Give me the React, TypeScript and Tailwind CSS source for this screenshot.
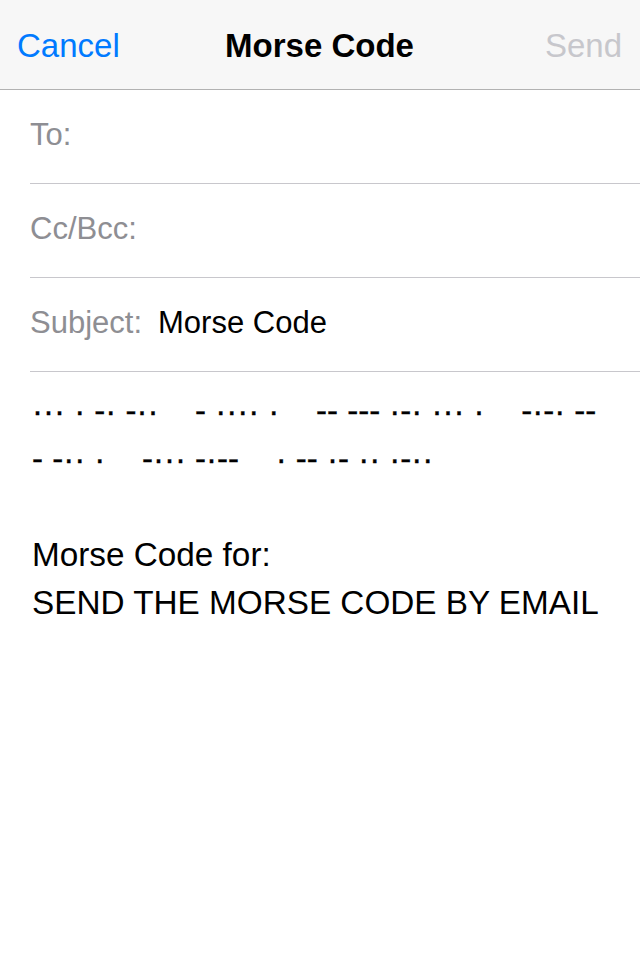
export default function App() {
  const morse1 = "··· · -· -··    - ···· ·    -- --- ·-· ··· ·    -·-· --";
  const morse2 = "- -·· ·    -··· -·--    · -- ·- ·· ·-··";

  return (
    <main
      className="min-h-[960px] w-[640px] bg-white text-black"
      style={{ fontFamily: '"Liberation Sans", Arial, sans-serif' }}
    >
      {/* NAV BAR */}
      <div className="flex h-[90px] items-center justify-between border-b border-[#b2b2b2] bg-[#f7f7f7] pl-[17px] pr-[18px] pt-[2px]">
        <span className="w-[150px] text-[33px] text-[#007aff]">Cancel</span>
        <span className="text-[33px] font-bold">Morse Code</span>
        <span className="w-[150px] text-right text-[33px] text-[#c7c7cc]">Send</span>
      </div>

      {/* FIELDS */}
      <div className="pl-[30px]">
        <div className="flex h-[94px] items-center border-b border-[#c8c7cc] pb-[2px]">
          <span className="text-[31px] text-[#8e8e93]">To:</span>
        </div>
        <div className="flex h-[94px] items-center border-b border-[#c8c7cc] pb-[2px]">
          <span className="text-[31px] text-[#8e8e93]">Cc/Bcc:</span>
        </div>
        <div className="flex h-[94px] items-center gap-[16px] border-b border-[#c8c7cc] pb-[2px]">
          <span className="text-[31px] text-[#8e8e93]">Subject:</span>
          <span className="text-[31px]">Morse Code</span>
        </div>
      </div>

      {/* BODY */}
      <div className="whitespace-pre pl-[32px] pt-[15px] text-[33.3px] leading-[48px]">
        <div className="text-[33px] [-webkit-text-stroke:0.35px_black]">{morse1}</div>
        <div className="text-[33px] [-webkit-text-stroke:0.35px_black]">{morse2}</div>
        <div>&nbsp;</div>
        <div>Morse Code for:</div>
        <div>SEND THE MORSE CODE BY EMAIL</div>
      </div>
    </main>
  );
}
